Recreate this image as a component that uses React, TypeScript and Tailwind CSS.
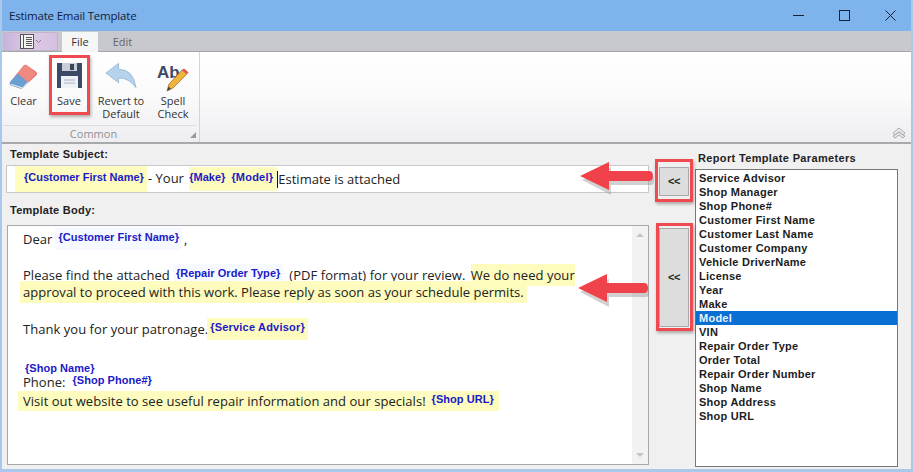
import type { ReactNode } from "react";

const params = [
  "Service Advisor",
  "Shop Manager",
  "Shop Phone#",
  "Customer First Name",
  "Customer Last Name",
  "Customer Company",
  "Vehicle DriverName",
  "License",
  "Year",
  "Make",
  "Model",
  "VIN",
  "Repair Order Type",
  "Order Total",
  "Repair Order Number",
  "Shop Name",
  "Shop Address",
  "Shop URL",
];

function Token({ children, bg = "" }: { children: ReactNode; bg?: string }) {
  return (
    <span
      className={`inline-flex h-[22px] items-center whitespace-nowrap px-[3px] font-['Liberation_Sans',sans-serif] text-[11px] font-bold text-[#1a1ac8] ${bg}`}
    >
      <span className="-translate-y-[2px]">{children}</span>
    </span>
  );
}

function Mark({ children }: { children: ReactNode }) {
  return <span className="ml-[2px] bg-[#fdfbbd] py-[2px]">{children}</span>;
}

function RibbonButton({ icon, label, width }: { icon: ReactNode; label: ReactNode; width: string }) {
  return (
    <div className={`flex flex-col items-center ${width}`}>
      <div className="flex h-[33px] w-[32px] items-center justify-center">{icon}</div>
      <div className="mt-[2px] text-center text-[11px] leading-[13px] text-[#333]">{label}</div>
    </div>
  );
}

// red annotation arrow, tip on the left
function Arrow({ className, length }: { className: string; length: number }) {
  return (
    <svg className={`absolute ${className}`} width={length + 4} height="36" viewBox={`0 0 ${length + 4} 36`}>
      <path d={`M1 16 L30 3 V11 H${length - 3} Q${length} 11 ${length} 16 Q${length} 21 ${length - 3} 21 H30 V31 Z`} fill="#8d8d8d" opacity="0.4" transform="translate(1 3)" />
      <path d={`M0 15 L29 1 V10 H${length - 4} Q${length} 10 ${length} 15 Q${length} 20 ${length - 4} 20 H29 V29 Z`} fill="#f0424a" />
    </svg>
  );
}

export default function App() {
  return (
    <div className="flex h-[472px] w-[913px] flex-col overflow-hidden border-x-2 border-b-[3px] border-[#a9c8ec] bg-[#f0f0f0] font-['Open_Sans','Liberation_Sans',sans-serif]">
      {/* Title bar */}
      <div className="-mx-[2px] flex h-[31px] shrink-0 items-center justify-between bg-[#7fb3ec] pl-[9px]">
        <span className="text-[11.5px] tracking-[-0.2px] text-[#10203a]">Estimate Email Template</span>
        <div className="flex items-center gap-[35px] pr-[17px]">
          <svg width="11" height="11" viewBox="0 0 11 11">
            <path d="M0 5.5H11" stroke="#15233a" strokeWidth="1" />
          </svg>
          <svg width="11" height="11" viewBox="0 0 11 11">
            <rect x="0.5" y="0.5" width="10" height="10" fill="none" stroke="#15233a" />
          </svg>
          <svg width="11" height="11" viewBox="0 0 11 11">
            <path d="M0.5 0.5L10.5 10.5M10.5 0.5L0.5 10.5" stroke="#15233a" strokeWidth="1" />
          </svg>
        </div>
      </div>

      {/* Tab strip */}
      <div className="-mx-[2px] flex h-[21px] shrink-0 border-b border-[#a5a6aa] bg-[#c8c9ce] pl-[3px]">
        <div className="mt-[1px] flex h-[19px] w-[55px] items-center justify-center border border-[#bdb8c4] bg-gradient-to-r from-[#c9b4dc] via-[#dccbe6] to-[#d7bfe2]">
          <svg width="22" height="15" viewBox="0 0 22 15">
            <rect x="0.5" y="0.5" width="13" height="14" fill="#f4f4f4" stroke="#555" />
            <path d="M3.5 0.5V14.5M6 3.5H12M6 5.5H12M6 7.5H12M6 9.5H12M6 11.5H12" stroke="#555" />
            <path d="M16 6L18.5 8.5L21 6" fill="none" stroke="#8a7a98" />
          </svg>
        </div>
        <div className="ml-[4px] mt-[1px] flex h-[20px] w-[36px] items-center justify-center bg-[#f6f6f7] pt-[1px] text-[11px] text-[#333]">File</div>
        <div className="mt-[1px] flex h-[20px] w-[49px] items-center justify-center pt-[1px] text-[11px] text-[#666]">Edit</div>
      </div>

      {/* Ribbon */}
      <div className="-mx-[2px] flex h-[92px] shrink-0 border-b-2 border-[#a8a9ad] bg-gradient-to-b from-white via-[#fafafb] to-[#eeeef1]">
        <div className="relative flex h-full w-[200px] flex-col border-r border-[#d5d5d8]">
          <div className="flex h-[73px] pl-[3px] pt-[7px]">
            <RibbonButton
              width="w-[41px]"
              label="Clear"
              icon={
                <svg width="31" height="29" viewBox="0 0 32 30">
                  <path d="M2 22 L16 5 Q18 3 20 5 L29 11 Q31 13 29 15 L15 28 Q13 29 11 28 L3 25 Q1 24 2 22Z" fill="#e8686a" />
                  <path d="M2 22 L10 13 L21 22 L15 28 Q13 29 11 28 L3 25 Q1 24 2 22Z" fill="#6a9fd4" />
                  <path d="M10 13 L21 22 L29 13 L20 5 Q18 3 16 5Z" fill="#ef8a80" />
                  <path d="M3 24 L12 27 L15 28 L21 22" fill="none" stroke="#d8e4ee" strokeWidth="1.2" />
                </svg>
              }
            />
            <RibbonButton
              width="w-[50px]"
              label="Save"
              icon={
                <svg width="27" height="27" viewBox="0 0 27 27">
                  <path d="M1 1H26V26H1Z" fill="#3d4a66" />
                  <rect x="6" y="1" width="15" height="8" fill="#c9ced8" />
                  <rect x="14" y="2" width="4" height="6" fill="#39445c" />
                  <rect x="5" y="14" width="17" height="12" fill="#eef1f6" />
                  <path d="M8 18H19M8 21H19" stroke="#aab4c4" />
                </svg>
              }
            />
            <RibbonButton
              width="w-[54px]"
              label={
                <>
                  Revert to
                  <br />
                  Default
                </>
              }
              icon={
                <svg width="33" height="27" viewBox="0 0 33 27">
                  <path d="M1 11 L14 1 V7 Q29 7 32 26 Q25 16 14 16 V21 Z" fill="#b7d3ec" stroke="#8fb1cf" strokeWidth="0.8" />
                </svg>
              }
            />
            <RibbonButton
              width="w-[50px]"
              label={
                <>
                  Spell
                  <br />
                  Check
                </>
              }
              icon={
                <div className="relative h-[30px] w-[32px]">
                  <span className="absolute left-0 top-[-1px] font-['Liberation_Sans',sans-serif] text-[17px] font-bold text-[#3d4a66]">Ab</span>
                  <svg className="absolute left-[8px] top-[7px]" width="24" height="24" viewBox="0 0 24 24">
                    <path d="M4 16 L17 2 L22 6 L8 20 L2 23 Z" fill="#f0b33c" stroke="#9a6a20" strokeWidth="0.7" />
                    <path d="M17 2 L19 0.5 L23.5 4.5 L22 6Z" fill="#e0524a" />
                    <path d="M2 23 L3.5 18.5 L6 21Z" fill="#444" />
                  </svg>
                </div>
              }
            />
          </div>
          <div className="mx-[3px] flex h-[17px] items-center justify-center border-t border-[#dedee1] pr-[12px] pt-[1px] text-[11px] text-[#8f8f92]">Common</div>
          <svg className="absolute bottom-[4px] right-[3px]" width="6" height="6" viewBox="0 0 6 6">
            <path d="M6 0V6H0Z" fill="#9a9a9d" />
          </svg>
        </div>
        <div className="flex flex-1 items-end justify-end pb-[3px] pr-[7px]">
          <svg width="14" height="12" viewBox="0 0 14 12">
            <path d="M1 6L7 1L13 6L11 8L7 5L3 8Z" fill="#e8e8ea" stroke="#9a9a9e" strokeWidth="0.8" />
            <path d="M1 9L3 8L7 5L11 8L13 9L11 11L7 8L3 11Z" fill="#e8e8ea" stroke="#9a9a9e" strokeWidth="0.8" />
          </svg>
        </div>
      </div>

      {/* Main */}
      <div className="relative flex min-h-0 flex-1 font-['Liberation_Sans',sans-serif]">
        <div className="ml-[5px] flex w-[642px] flex-col pb-[4px] pt-[3px]">
          <div className="h-[18px] pl-[3px] text-[11px] font-bold leading-[15px] tracking-[0.25px] text-[#222]">Template Subject:</div>
          <div className="-ml-[1px] flex h-[28px] items-center border border-[#c8c8cc] bg-white pl-[8px] pr-[2px] font-['Open_Sans',sans-serif] text-[13px] text-[#222]">
            <span className="flex h-[26px] w-[132px] shrink-0 items-center bg-[#fdfbbd] pl-[6px]">
              <Token>{"{Customer First Name}"}</Token>
            </span>
            <span className="ml-[1px] whitespace-pre">- Your </span>
            <span className="ml-[2px] flex h-[24px] w-[88px] shrink-0 items-center bg-[#fdfbbd]">
              <Token bg="!px-0">{"{Make}"}</Token>
              <Token bg="ml-[3px] tracking-[0.2px]">{"{Model}"}</Token>
            </span>
            <span className="h-[17px] whitespace-nowrap border-l border-[#111] leading-[17px]">Estimate is attached</span>
          </div>
          <div className="mt-[10px] h-[22px] pl-[3px] text-[11px] font-bold leading-[15px] tracking-[0.25px] text-[#222]">Template Body:</div>

          <div className="flex min-h-0 flex-1 border border-[#a8a8ac] bg-white">
            <div className="flex-1 whitespace-nowrap pl-[15px] pt-[4px] font-['Open_Sans',sans-serif] text-[13px] leading-[18px] tracking-[0.04px] text-[#222]">
              <div className="flex h-[18px] items-center">
                Dear <Token bg="ml-[3px] bg-[#f6f9ff]">{"{Customer First Name}"}</Token> <span className="ml-[2px]">,</span>
              </div>
              <div className="mt-[18px] flex h-[18px] items-center">
                Please find the attached <Token bg="ml-[3px] bg-[#f6f9ff]">{"{Repair Order Type}"}</Token>
                <span className="ml-[6px] whitespace-pre">(PDF format) for your review. </span>
                <Mark>We do need your</Mark>
              </div>
              <div className="-ml-[3px] -mt-[1px] flex h-[18px] items-center tracking-[0.02px]">
                <span className="bg-[#fdfbbd] px-[3px] py-[2px]">approval to proceed with this work. Please reply as soon as your schedule permits.</span>
              </div>
              <div className="mt-[19px] flex h-[18px] items-center">
                Thank you for your patronage. <Token bg="-ml-[1px] bg-[#fdfbbd] tracking-[0.2px]">{"{Service Advisor}"}</Token>
              </div>
              <div className="-mb-[4px] -ml-[1px] mt-[25px] flex h-[14px] items-center">
                <Token>{"{Shop Name}"}</Token>
              </div>
              <div className="flex h-[18px] items-center">
                Phone: <Token bg="ml-[4px]">{"{Shop Phone#}"}</Token>
              </div>
              <div className="-ml-[5px] flex h-[19px] items-center">
                <span className="flex h-[20px] items-center bg-[#fdfbbd] pl-[5px] pr-[2px]">
                  Visit out website to see useful repair information and our specials!
                  <Token bg="ml-[3px]">{"{Shop URL}"}</Token>
                </span>
              </div>
            </div>
            <div className="flex w-[16px] flex-col items-center justify-between bg-[#f2f2f3] py-[7px]">
              <div className="h-0 w-0 border-x-[4px] border-b-[4px] border-x-transparent border-b-[#c4c4c6]" />
              <div className="h-0 w-0 border-x-[4px] border-t-[4px] border-x-transparent border-t-[#c4c4c6]" />
            </div>
          </div>
        </div>

        {/* Add buttons */}
        <div className="ml-[10px] flex w-[30px] flex-col pt-[23px]">
          <div className="flex h-[29px] items-center justify-center border border-[#a9a9ad] bg-[#dddddd] text-[11px] font-bold tracking-[-0.5px] text-[#222]">&lt;&lt;</div>
          <div className="mt-[32px] flex h-[99px] items-center justify-center border border-[#a9a9ad] bg-[#dddddd] text-[11px] font-bold tracking-[-0.5px] text-[#222]">&lt;&lt;</div>
        </div>

        {/* Parameters */}
        <div className="ml-[6px] flex w-[203px] flex-col pb-[2px] pt-[7px]">
          <div className="h-[18px] pl-[3px] text-[11px] font-bold leading-[15px] tracking-[0.35px] text-[#222]">Report Template Parameters</div>
          <div className="min-h-0 flex-1 border border-[#777] bg-white pt-[1px]">
            {params.map((p) => (
              <div
                key={p}
                className={`h-[14px] pl-[3px] text-[11px] font-bold leading-[14px] tracking-[0.25px] ${p === "Model" ? "bg-[#0a6fd2] text-[#e8f2ff]" : "text-[#1c1c1c]"}`}
              >
                {p}
              </div>
            ))}
          </div>
        </div>

        {/* Annotations laid over the screenshot */}
        <Arrow className="left-[578px] top-[17px]" length={73} />
        <Arrow className="left-[576px] top-[129px]" length={70} />
        <div className="absolute left-[653px] top-[15px] h-[43px] w-[38px] border-[3px] border-[#ee4a50] shadow-[1px_2px_3px_rgba(0,0,0,0.3)]" />
        <div className="absolute left-[654px] top-[79px] h-[108px] w-[37px] border-[3px] border-[#ee4a50] shadow-[1px_2px_3px_rgba(0,0,0,0.3)]" />
      </div>

      <div className="absolute left-[49px] top-[55px] h-[60px] w-[41px] border-[3px] border-[#ee4a50] shadow-[1px_2px_3px_rgba(0,0,0,0.3)]" />
    </div>
  );
}
